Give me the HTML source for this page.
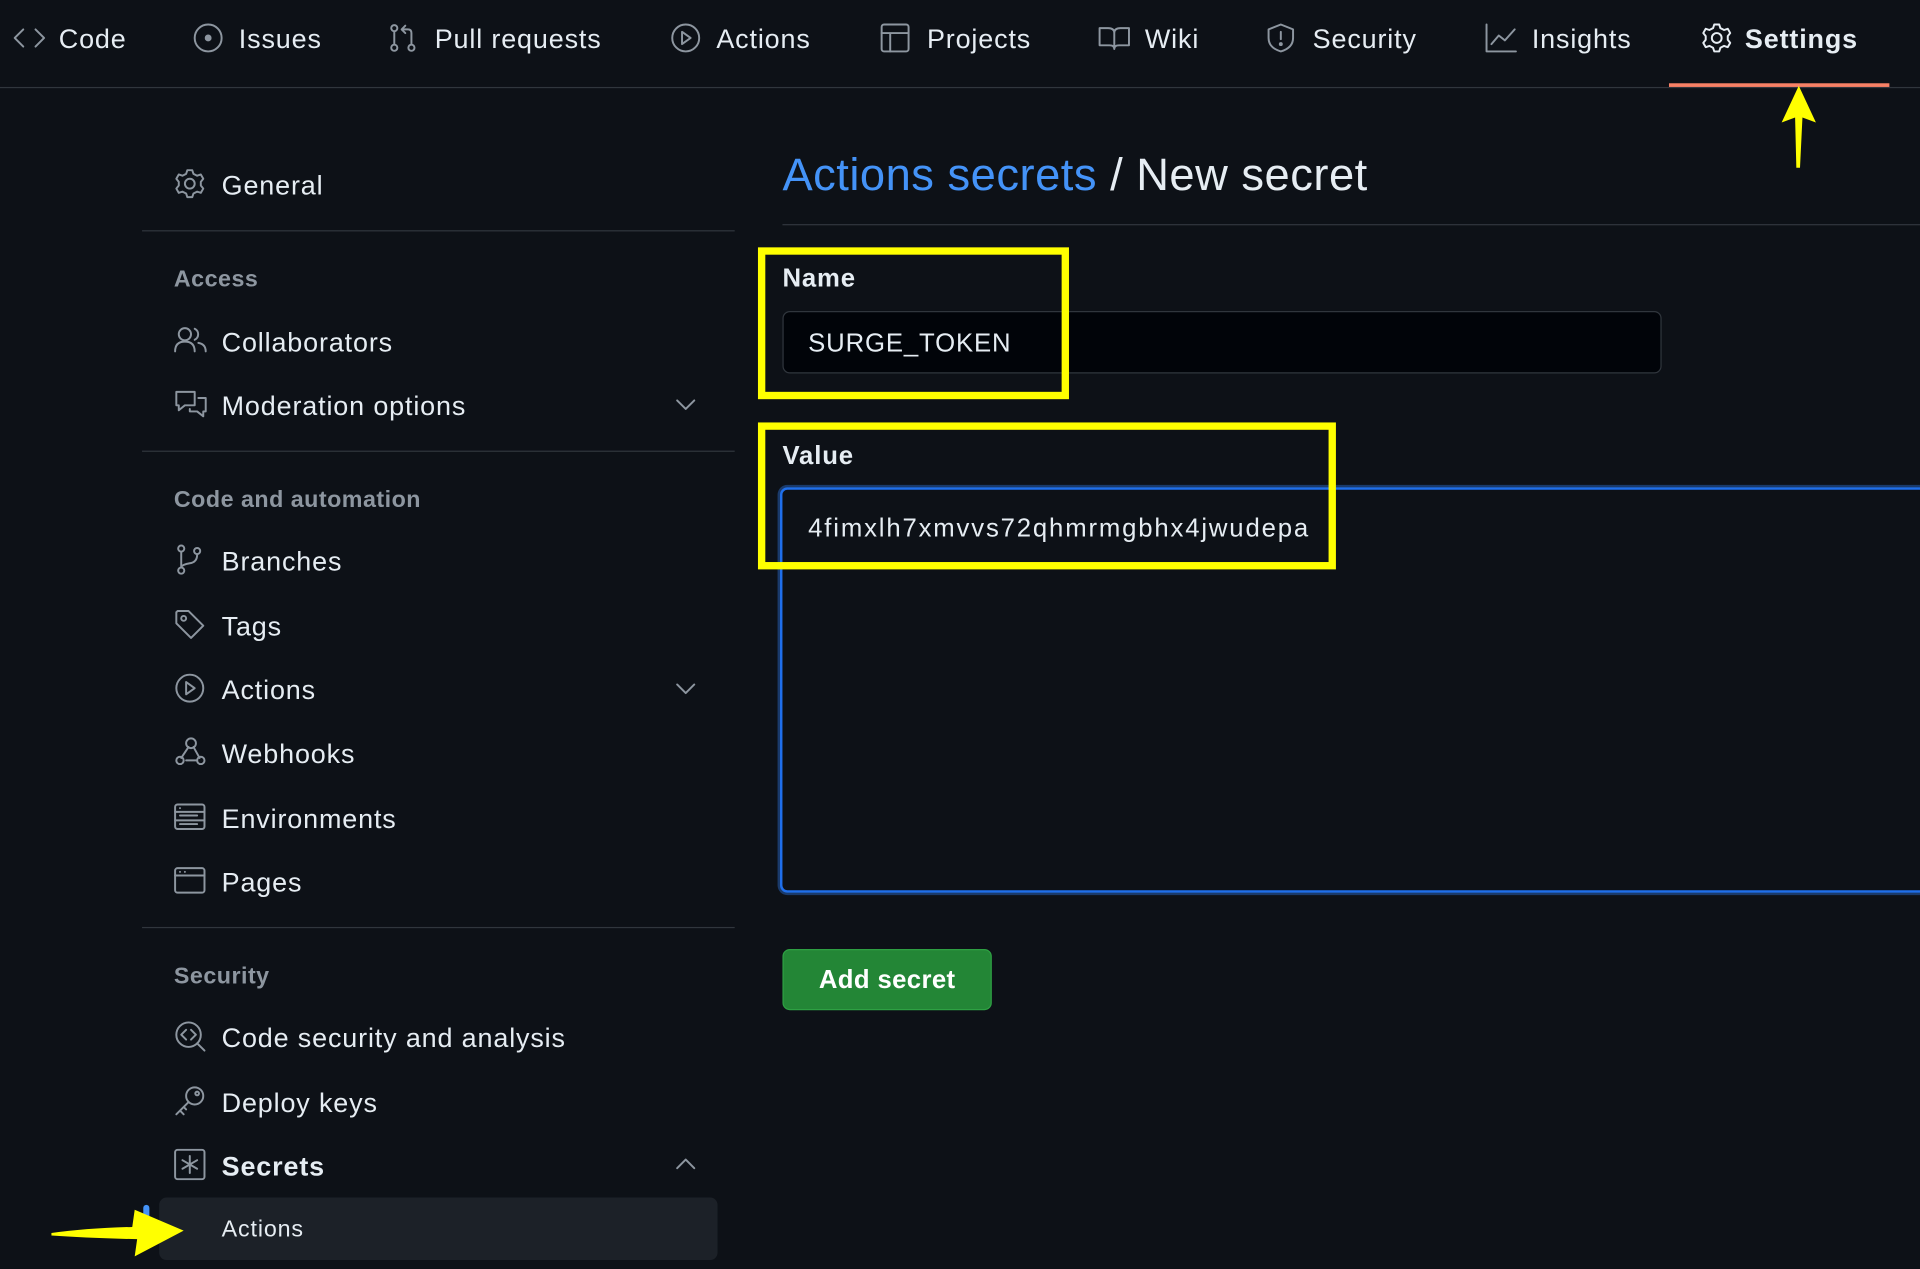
<!DOCTYPE html>
<html><head><meta charset="utf-8"><style>
html,body{margin:0;padding:0;background:#0d1117;overflow:hidden;width:1920px;height:1268px}
#w{position:absolute;left:0;top:0;width:1568px;height:1036px;transform:scale(1.22449);transform-origin:0 0;font-family:"Liberation Sans",sans-serif;color:#e6edf3;background:#0d1117;letter-spacing:0.7px}
.a{position:absolute;white-space:nowrap}
.nav{font-size:22px;top:19px}
.ic{position:absolute;fill:none;stroke:#8d96a0;stroke-width:1.6;stroke-linecap:round;stroke-linejoin:round}
.si{font-size:22px}
.hd{font-size:19px;color:#8d96a0;font-weight:bold;letter-spacing:0.4px}
.dv{position:absolute;left:116px;width:484px;height:1px;background:#30363d}
.yb{position:absolute;border:6px solid #ffff00;box-sizing:border-box}
</style></head><body><div id="w">
<div class="a" style="left:0;top:71px;width:1568px;height:1px;background:#30363d"></div>
<div class="a" style="left:1363px;top:68px;width:180px;height:3px;background:#f78166"></div>
<svg class="ic" style="left:10px;top:19px" width="28" height="24" viewBox="0 0 28 24"><path d="M9 5L2 12l7 7M19 5l7 7-7 7"/></svg>
<div class="a nav" style="left:48px">Code</div>
<svg class="ic" style="left:157px;top:18px" width="26" height="26"><circle cx="13" cy="13" r="11"/><circle cx="13" cy="13" r="2" fill="#8d96a0"/></svg>
<div class="a nav" style="left:195px">Issues</div>
<svg class="ic" style="left:316px;top:18px" width="26" height="26"><circle cx="6" cy="5" r="2.5"/><circle cx="6" cy="21" r="2.5"/><circle cx="20" cy="21" r="2.5"/><path d="M6 8v10M20 18V9q0-3-3-3h-4M15 3l-3 3 3 3"/></svg>
<div class="a nav" style="left:355px">Pull requests</div>
<svg class="ic" style="left:547px;top:18px" width="26" height="26"><circle cx="13" cy="13" r="11"/><path d="M10 8l7 5-7 5z"/></svg>
<div class="a nav" style="left:585px">Actions</div>
<svg class="ic" style="left:718px;top:18px" width="26" height="26"><rect x="2" y="2" width="22" height="22" rx="2"/><path d="M2 9h22M9 9v15"/></svg>
<div class="a nav" style="left:757px">Projects</div>
<svg class="ic" style="left:896px;top:19px" width="28" height="24"><path d="M2 4h7q5 0 5 4v13q0-3-4-3H2zM26 4h-7q-5 0-5 4v13q0-3 4-3h8z"/></svg>
<div class="a nav" style="left:935px">Wiki</div>
<svg class="ic" style="left:1033px;top:18px" width="26" height="26"><path d="M13 2l10 4v7q0 8-10 11Q3 21 3 13V6z"/><path d="M13 8v6"/><circle cx="13" cy="18" r="0.8"/></svg>
<div class="a nav" style="left:1072px">Security</div>
<svg class="ic" style="left:1212px;top:18px" width="28" height="26"><path d="M2 2v22h24M6 18l6-7 5 4 8-9"/></svg>
<div class="a nav" style="left:1251px">Insights</div>
<svg class="ic" style="left:1389px;top:18px;stroke:#e6edf3" width="26" height="26"><circle cx="13" cy="13" r="4"/><path d="M11 2h4l1 3 3 1.5 3-1 2 3.5-2 2.5v3l2 2.5-2 3.5-3-1-3 1.5-1 3h-4l-1-3-3-1.5-3 1-2-3.5 2-2.5v-3l-2-2.5 2-3.5 3 1 3-1.5z"/></svg>
<div class="a nav" style="left:1425px;font-weight:bold">Settings</div>

<svg class="ic" style="left:142px;top:137px" width="26" height="26"><circle cx="13" cy="13" r="4"/><path d="M11 2h4l1 3 3 1.5 3-1 2 3.5-2 2.5v3l2 2.5-2 3.5-3-1-3 1.5-1 3h-4l-1-3-3-1.5-3 1-2-3.5 2-2.5v-3l-2-2.5 2-3.5 3 1 3-1.5z"/></svg>
<div class="a si" style="left:181px;top:139px">General</div>
<div class="dv" style="top:188px"></div>
<div class="a hd" style="left:142px;top:218px">Access</div>
<svg class="ic" style="left:142px;top:265px" width="28" height="26"><circle cx="9" cy="8" r="5"/><path d="M1 22q0-8 8-8t8 8M17 3.5a5 5 0 0 1 0 9M20 15q6 1 6 7"/></svg>
<div class="a si" style="left:181px;top:267px">Collaborators</div>
<svg class="ic" style="left:142px;top:317px" width="28" height="26"><path d="M2 3h15v11H9l-5 4v-4H2zM20 8h6v11h-2v4l-5-4h-6v-2"/></svg>
<div class="a si" style="left:181px;top:319px">Moderation options</div>
<svg class="ic" style="left:550px;top:322px" width="20" height="16"><path d="M3 5l7 7 7-7"/></svg>
<div class="dv" style="top:368px"></div>
<div class="a hd" style="left:142px;top:398px">Code and automation</div>
<svg class="ic" style="left:142px;top:444px" width="26" height="26"><circle cx="6" cy="4" r="2.5"/><circle cx="6" cy="22" r="2.5"/><circle cx="19" cy="6" r="2.5"/><path d="M6 7v12M19 9q0 6-6 7t-7 3"/></svg>
<div class="a si" style="left:181px;top:446px">Branches</div>
<svg class="ic" style="left:142px;top:497px" width="26" height="26"><path d="M2 3v9l12 12 10-10L12 2H3z"/><circle cx="8" cy="8" r="2"/></svg>
<div class="a si" style="left:181px;top:499px">Tags</div>
<svg class="ic" style="left:142px;top:549px" width="26" height="26"><circle cx="13" cy="13" r="11"/><path d="M10 8l7 5-7 5z"/></svg>
<div class="a si" style="left:181px;top:551px">Actions</div>
<svg class="ic" style="left:550px;top:554px" width="20" height="16"><path d="M3 5l7 7 7-7"/></svg>
<svg class="ic" style="left:142px;top:601px" width="28" height="26"><circle cx="14" cy="6" r="4"/><circle cx="5" cy="20" r="3"/><circle cx="22" cy="20" r="3"/><path d="M12 9l-6 9M10 20h9M16 9l5 9"/></svg>
<div class="a si" style="left:181px;top:603px">Webhooks</div>
<svg class="ic" style="left:142px;top:654px" width="26" height="26"><rect x="1" y="3" width="24" height="20" rx="2"/><path d="M1 9h24M1 16h24M5 6h0M5 12h14M5 19h14"/></svg>
<div class="a si" style="left:181px;top:656px">Environments</div>
<svg class="ic" style="left:142px;top:706px" width="26" height="26"><rect x="1" y="3" width="24" height="20" rx="2"/><path d="M1 9h24M5 6h0M9 6h0"/></svg>
<div class="a si" style="left:181px;top:708px">Pages</div>
<div class="dv" style="top:757px"></div>
<div class="a hd" style="left:142px;top:787px">Security</div>
<svg class="ic" style="left:142px;top:833px" width="28" height="28"><circle cx="12" cy="12" r="10"/><path d="M19 19l6 6M10 8l-4 4 4 4M14 8l4 4-4 4"/></svg>
<div class="a si" style="left:181px;top:835px">Code security and analysis</div>
<svg class="ic" style="left:142px;top:886px" width="26" height="26"><circle cx="17" cy="9" r="7"/><circle cx="19" cy="7" r="1.5"/><path d="M12 14L2 24M5 21l3 3M8 18l2 2"/></svg>
<div class="a si" style="left:181px;top:888px">Deploy keys</div>
<svg class="ic" style="left:142px;top:938px" width="26" height="26"><rect x="1" y="1" width="24" height="24" rx="2"/><path d="M13 6v14M7 9.5l12 7M19 9.5l-12 7"/></svg>
<div class="a si" style="left:181px;top:940px;font-weight:bold">Secrets</div>
<svg class="ic" style="left:550px;top:942px" width="20" height="16"><path d="M3 12l7-7 7 7"/></svg>
<div class="a" style="left:130px;top:978px;width:456px;height:51px;background:#1c2128;border-radius:6px"></div>
<div class="a" style="left:117px;top:984px;width:5px;height:24px;background:#4493f8;border-radius:3px"></div>
<div class="a" style="left:181px;top:994px;font-size:19px">Actions</div>

<div class="a" style="left:639px;top:122px;font-size:37px;letter-spacing:0.4px"><span style="color:#4493f8">Actions secrets</span> / New secret</div>
<div class="a" style="left:639px;top:183px;width:929px;height:1px;background:#30363d"></div>
<div class="a" style="left:639px;top:216px;font-size:21px;font-weight:bold">Name</div>
<div class="a" style="left:639px;top:254px;width:716px;height:49px;background:#010409;border:1px solid #30363d;border-radius:6px"></div>
<div class="a" style="left:660px;top:269px;font-size:21px">SURGE_TOKEN</div>
<div class="a" style="left:639px;top:361px;font-size:21px;font-weight:bold">Value</div>
<div class="a" style="left:637px;top:398px;width:960px;height:327px;background:#0d1117;border:2px solid #1f6feb;border-radius:6px;box-shadow:0 0 0 2px #1a3a6a"></div>
<div class="a" style="left:660px;top:420px;font-size:21px;letter-spacing:1.5px">4fimxlh7xmvvs72qhmrmgbhx4jwudepa</div>
<div class="a" style="left:639px;top:775px;width:171px;height:50px;background:#238636;border:1px solid #2ea043;box-sizing:border-box;border-radius:6px;color:#fff;font-weight:bold;font-size:21px;text-align:center;line-height:50px;letter-spacing:0.3px">Add secret</div>

<div class="yb" style="left:619px;top:202px;width:254px;height:124px"></div>
<div class="yb" style="left:619px;top:345px;width:472px;height:120px"></div>

<svg class="a" style="left:0;top:0" width="1568" height="1036">
<path d="M1469 70 L1483 100 L1472 96 L1470 137 L1467 137 L1466 96 L1455 100 Z" fill="#ffff00"/>
<path d="M42 1007 Q70 1003 108 1002 L110 988 L150 1005 L110 1026 L112 1012 Q70 1011 42 1009 Z" fill="#ffff00"/>
</svg>
</div></body></html>
